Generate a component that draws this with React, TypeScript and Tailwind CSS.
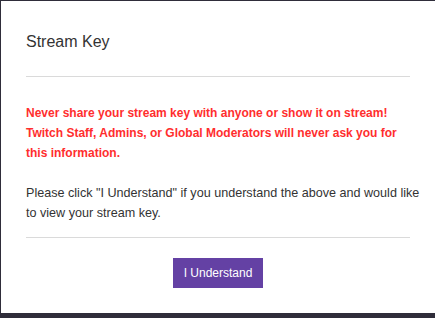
import React from 'react';

export default function App() {
  return (
    <div className="w-[435px] h-[318px] bg-[#2f2d3a] pt-px pl-px pb-[5px] font-['Liberation_Sans',Arial,sans-serif]">
      <div className="h-full bg-white px-[25px] pt-[30px]">
        <h1 className="text-[16px] leading-[22px] text-[#333333]">Stream Key</h1>
        <hr className="mt-[23px] border-0 border-t border-[#dadada]" />
        <p className="mt-[26px] text-[12px] leading-[20px] font-bold text-[#ff2e2e] whitespace-nowrap">
          Never share your stream key with anyone or show it on stream!
          <br />
          Twitch Staff, Admins, or Global Moderators will never ask you for
          <br />
          this information.
        </p>
        <p className="mt-[20px] text-[12.6px] leading-[20px] text-[#333333] whitespace-nowrap">
          Please click "I Understand" if you understand the above and would like
          <br />
          to view your stream key.
        </p>
        <hr className="mt-[14px] border-0 border-t border-[#dadada]" />
        <div className="flex justify-center mt-[20px]">
          <button className="w-[90px] h-[30px] bg-[#6441a4] text-white text-[12px]">
            I Understand
          </button>
        </div>
      </div>
    </div>
  );
}
